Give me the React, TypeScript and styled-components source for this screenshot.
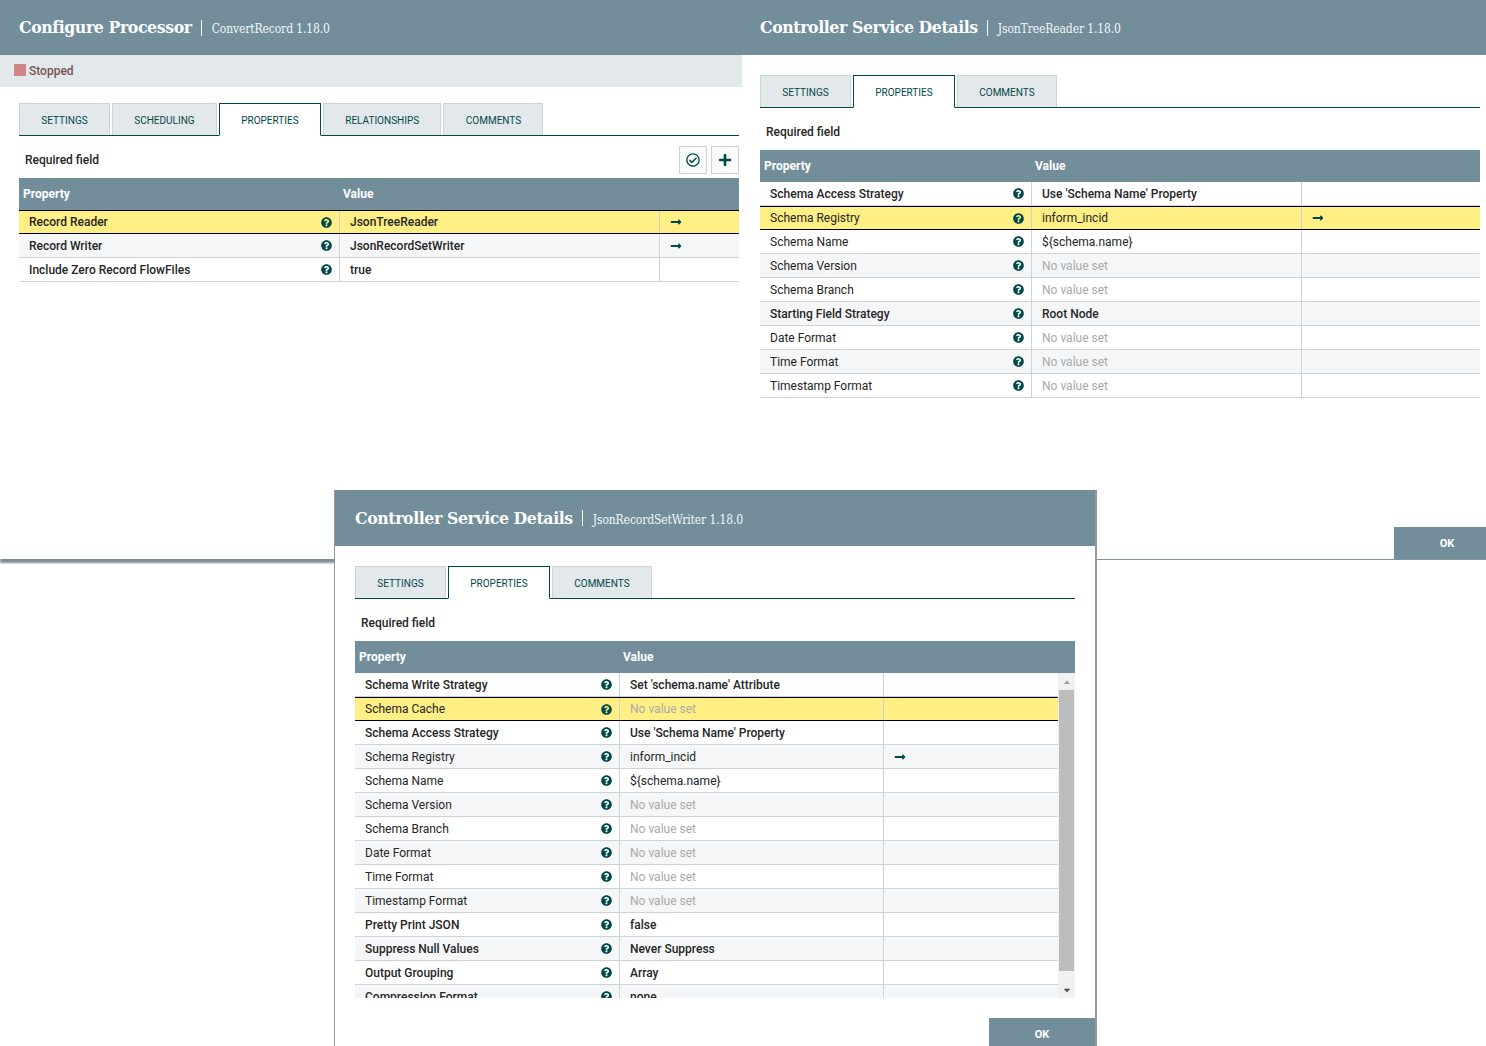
import styled, { createGlobalStyle } from 'styled-components';
import {
  FaCaretDown,
  FaCaretUp,
  FaLongArrowAltRight,
  FaPlus,
  FaQuestionCircle,
  FaRegCheckCircle,
} from 'react-icons/fa';

const slate = '#728e9b';
const teal = '#004849';
const line = '#cfd3d7';

const GlobalStyle = createGlobalStyle`
  html, body {
    margin: 0;
    background: #ffffff;
    font-family: Roboto, 'Liberation Sans', sans-serif;
  }
  * {
    box-sizing: border-box;
  }
`;

const Desktop = styled.div`
  position: relative;
  width: 1486px;
  height: 1046px;
  overflow: hidden;
  background: #ffffff;
`;

const Dialog = styled.section<{ $left: number; $top: number; $width: number; $height: number; $z: number }>`
  position: absolute;
  left: ${(p) => p.$left}px;
  top: ${(p) => p.$top}px;
  width: ${(p) => p.$width}px;
  height: ${(p) => p.$height}px;
  z-index: ${(p) => p.$z};
  display: flex;
  flex-direction: column;
  background: #ffffff;
`;

const ProcessorDialog = styled(Dialog)`
  box-shadow: 0 4px 2px 0 #7f8d93;
`;

const ServiceDialog = styled(Dialog)`
  border-bottom: 1px solid #87949a;
`;

const TopDialog = styled(Dialog)`
  border-left: 1px solid #8f9ba1;
  border-right: 2px solid #8f9ba1;
`;

const Header = styled.header<{ $height: number; $left: number }>`
  flex: none;
  height: ${(p) => p.$height}px;
  padding-left: ${(p) => p.$left}px;
  display: flex;
  align-items: center;
  background: ${slate};
  color: #ffffff;
`;

const Title = styled.h1`
  margin: -1px 0 0;
  font-family: 'DejaVu Serif Condensed', 'DejaVu Serif', serif;
  font-size: 17.5px;
  font-weight: 700;
  letter-spacing: -0.4px;
`;

const TitleRule = styled.span`
  width: 1px;
  height: 16px;
  margin: 0 10px 0 9px;
  background: #ffffff;
`;

const Subtitle = styled.span`
  margin-top: 3px;
  font-family: 'DejaVu Serif Condensed', 'DejaVu Serif', serif;
  font-size: 12px;
  line-height: 16px;
  letter-spacing: -0.12px;
  color: #f4f6f7;
`;

const StatusBar = styled.div`
  flex: none;
  height: 32px;
  padding-left: 14px;
  display: flex;
  align-items: center;
  gap: 3px;
  background: #e3e8eb;
  font-size: 12px;
  font-weight: 500;
  color: #775351;
`;

const StatusSquare = styled.span`
  width: 12px;
  height: 12px;
  margin-top: -2px;
  background: #d18686;
`;

const Content = styled.div<{ $top: number; $left: number; $width: number }>`
  flex: none;
  width: ${(p) => p.$width + p.$left}px;
  padding-top: ${(p) => p.$top}px;
  padding-left: ${(p) => p.$left}px;
`;

const TabBar = styled.div`
  height: 33px;
  display: flex;
  gap: 2px;
  border-bottom: 1px solid ${teal};
`;

const Tab = styled.div<{ $active?: boolean }>`
  height: ${(p) => (p.$active ? 33 : 32)}px;
  padding: 2px 21.3px 0;
  display: flex;
  align-items: center;
  font-size: 10px;
  font-weight: 400;
  text-transform: uppercase;
  color: #004849;
  background: ${(p) => (p.$active ? '#ffffff' : '#e3e8eb')};
  border: 1px solid ${(p) => (p.$active ? teal : line)};
  border-bottom: ${(p) => (p.$active ? '1px solid #ffffff' : 'none')};
`;

const FieldRow = styled.div`
  height: 42px;
  padding: 10px 0 4px 6px;
  display: flex;
  align-items: center;
  justify-content: space-between;
  font-size: 12px;
  font-weight: 500;
  color: #262626;
`;

const Tools = styled.div`
  display: flex;
  gap: 4px;
`;

const ToolButton = styled.button`
  width: 28px;
  height: 28px;
  padding: 0;
  display: flex;
  align-items: center;
  justify-content: center;
  background: #f9fafb;
  border: 1px solid ${line};
  color: ${teal};
  font-size: 14px;
`;

const HeadRow = styled.div<{ $prop: number }>`
  height: 32px;
  display: grid;
  grid-template-columns: ${(p) => p.$prop}px 1fr;
  align-items: center;
  background: ${slate};
  font-size: 12px;
  font-weight: 700;
  color: #ffffff;
`;

const HeadCell = styled.div`
  padding-left: 4px;
`;

const Viewport = styled.div<{ $height?: number }>`
  display: flex;
  height: ${(p) => (p.$height ? `${p.$height}px` : 'auto')};
  overflow: hidden;
`;

const RowList = styled.div`
  flex: 1;
  min-width: 0;
`;

const Row = styled.div<{ $prop: number; $value: number; $selected?: boolean; $odd: boolean }>`
  height: 24px;
  display: grid;
  grid-template-columns: ${(p) => p.$prop}px ${(p) => p.$value}px 1fr;
  font-size: 12px;
  color: #262626;
  background: ${(p) => (p.$selected ? '#ffef85' : p.$odd ? '#f4f6f7' : '#ffffff')};
  border-top: ${(p) => (p.$selected ? '1px solid #000000' : 'none')};
  border-bottom: 1px solid ${(p) => (p.$selected ? '#000000' : line)};
`;

const PropCell = styled.div<{ $bold?: boolean }>`
  padding: 0 7px 0 10px;
  display: flex;
  align-items: center;
  justify-content: space-between;
  font-weight: ${(p) => (p.$bold ? 500 : 400)};
  color: #262626;

  svg {
    flex: none;
    font-size: 11px;
    color: ${teal};
  }
`;

const ValueCell = styled.div<{ $bold?: boolean; $empty?: boolean }>`
  padding-left: 10px;
  display: flex;
  align-items: center;
  border-left: 1px solid ${line};
  font-weight: ${(p) => (p.$bold ? 500 : 400)};
  color: ${(p) => (p.$empty ? '#aaaaaa' : '#262626')};
`;

const ActionCell = styled.div`
  padding-left: 10px;
  display: flex;
  align-items: center;
  border-left: 1px solid ${line};
  color: ${teal};
  font-size: 12px;
`;

const Scrollbar = styled.div`
  flex: none;
  width: 17px;
  display: flex;
  flex-direction: column;
  align-items: center;
  background: #f1f1f1;
  font-size: 10px;
`;

const ScrollArrow = styled.div<{ $dark?: boolean }>`
  flex: none;
  height: 17px;
  margin-top: ${(p) => (p.$dark ? 'auto' : '0')};
  display: flex;
  align-items: center;
  justify-content: center;
  color: ${(p) => (p.$dark ? '#505050' : '#a3a3a3')};
`;

const ScrollThumb = styled.div`
  flex: none;
  width: 15px;
  height: 281px;
  background: #bdbdbd;
`;

const Footer = styled.div`
  margin-top: auto;
  display: flex;
  justify-content: flex-end;
`;

const OkButton = styled.button`
  width: 106px;
  height: 32px;
  padding: 0;
  border: none;
  background: ${slate};
  color: #ffffff;
  font-family: Roboto, sans-serif;
  font-size: 11px;
  font-weight: 700;
`;

type Property = {
  name: string;
  value?: string;
  bold?: boolean;
  link?: boolean;
  selected?: boolean;
};

const processorProps: Property[] = [
  { name: 'Record Reader', value: 'JsonTreeReader', bold: true, link: true, selected: true },
  { name: 'Record Writer', value: 'JsonRecordSetWriter', bold: true, link: true },
  { name: 'Include Zero Record FlowFiles', value: 'true', bold: true },
];

const readerProps: Property[] = [
  { name: 'Schema Access Strategy', value: "Use 'Schema Name' Property", bold: true },
  { name: 'Schema Registry', value: 'inform_incid', link: true, selected: true },
  { name: 'Schema Name', value: '${schema.name}' },
  { name: 'Schema Version' },
  { name: 'Schema Branch' },
  { name: 'Starting Field Strategy', value: 'Root Node', bold: true },
  { name: 'Date Format' },
  { name: 'Time Format' },
  { name: 'Timestamp Format' },
];

const writerProps: Property[] = [
  { name: 'Schema Write Strategy', value: "Set 'schema.name' Attribute", bold: true },
  { name: 'Schema Cache', selected: true },
  { name: 'Schema Access Strategy', value: "Use 'Schema Name' Property", bold: true },
  { name: 'Schema Registry', value: 'inform_incid', link: true },
  { name: 'Schema Name', value: '${schema.name}' },
  { name: 'Schema Version' },
  { name: 'Schema Branch' },
  { name: 'Date Format' },
  { name: 'Time Format' },
  { name: 'Timestamp Format' },
  { name: 'Pretty Print JSON', value: 'false', bold: true },
  { name: 'Suppress Null Values', value: 'Never Suppress', bold: true },
  { name: 'Output Grouping', value: 'Array', bold: true },
  { name: 'Compression Format', value: 'none', bold: true },
];

type TableProps = {
  rows: Property[];
  prop: number;
  value: number;
  height?: number;
  scroll?: boolean;
};

const PropertyTable = ({ rows, prop, value, height, scroll }: TableProps) => (
  <>
    <HeadRow $prop={prop}>
      <HeadCell>Property</HeadCell>
      <HeadCell>Value</HeadCell>
    </HeadRow>
    <Viewport $height={height}>
      <RowList>
        {rows.map((row, i) => (
          <Row key={row.name} $prop={prop} $value={value} $selected={row.selected} $odd={i % 2 === 1}>
            <PropCell $bold={row.bold}>
              {row.name}
              <FaQuestionCircle />
            </PropCell>
            <ValueCell $bold={row.bold} $empty={!row.value}>
              {row.value ?? 'No value set'}
            </ValueCell>
            <ActionCell>{row.link && <FaLongArrowAltRight />}</ActionCell>
          </Row>
        ))}
      </RowList>
      {scroll && (
        <Scrollbar>
          <ScrollArrow>
            <FaCaretUp />
          </ScrollArrow>
          <ScrollThumb />
          <ScrollArrow $dark>
            <FaCaretDown />
          </ScrollArrow>
        </Scrollbar>
      )}
    </Viewport>
  </>
);

const Tabs = ({ names }: { names: string[] }) => (
  <TabBar>
    {names.map((name) => (
      <Tab key={name} $active={name === 'Properties'}>
        {name}
      </Tab>
    ))}
  </TabBar>
);

export default function App() {
  return (
    <Desktop>
      <GlobalStyle />

      <ProcessorDialog $left={0} $top={0} $width={742} $height={559} $z={1}>
        <Header $height={55} $left={19}>
          <Title>Configure Processor</Title>
          <TitleRule />
          <Subtitle>ConvertRecord 1.18.0</Subtitle>
        </Header>
        <StatusBar>
          <StatusSquare />
          Stopped
        </StatusBar>
        <Content $top={16} $left={19} $width={720}>
          <Tabs names={['Settings', 'Scheduling', 'Properties', 'Relationships', 'Comments']} />
          <FieldRow>
            Required field
            <Tools>
              <ToolButton>
                <FaRegCheckCircle />
              </ToolButton>
              <ToolButton>
                <FaPlus />
              </ToolButton>
            </Tools>
          </FieldRow>
          <PropertyTable rows={processorProps} prop={320} value={320} />
        </Content>
      </ProcessorDialog>

      <ServiceDialog $left={742} $top={0} $width={758} $height={560} $z={2}>
        <Header $height={55} $left={18}>
          <Title>Controller Service Details</Title>
          <TitleRule />
          <Subtitle>JsonTreeReader 1.18.0</Subtitle>
        </Header>
        <Content $top={20} $left={18} $width={720}>
          <Tabs names={['Settings', 'Properties', 'Comments']} />
          <FieldRow>Required field</FieldRow>
          <PropertyTable rows={readerProps} prop={271} value={270} />
        </Content>
        <Footer>
          <OkButton>OK</OkButton>
        </Footer>
      </ServiceDialog>

      <TopDialog $left={334} $top={490} $width={763} $height={560} $z={3}>
        <Header $height={56} $left={20}>
          <Title>Controller Service Details</Title>
          <TitleRule />
          <Subtitle>JsonRecordSetWriter 1.18.0</Subtitle>
        </Header>
        <Content $top={20} $left={20} $width={720}>
          <Tabs names={['Settings', 'Properties', 'Comments']} />
          <FieldRow>Required field</FieldRow>
          <PropertyTable rows={writerProps} prop={264} value={264} height={325} scroll />
        </Content>
        <Footer>
          <OkButton>OK</OkButton>
        </Footer>
      </TopDialog>
    </Desktop>
  );
}
